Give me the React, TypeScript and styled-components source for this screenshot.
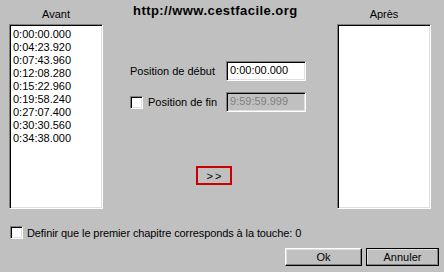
import styled, { createGlobalStyle, css } from "styled-components";

const GlobalStyle = createGlobalStyle`
  html, body {
    margin: 0;
    padding: 0;
    background: #c0c0c0;
  }
  body {
    font-family: "Liberation Sans", Arial, sans-serif;
    font-size: 11px;
    color: #000;
  }
`;

const chapters = [
  "0:00:00.000",
  "0:04:23.920",
  "0:07:43.960",
  "0:12:08.280",
  "0:15:22.960",
  "0:19:58.240",
  "0:27:07.400",
  "0:30:30.560",
  "0:34:38.000",
];

const sunken = css`
  border-style: solid;
  border-width: 1px;
  border-color: #808080 #fff #fff #808080;
  box-shadow: inset 1px 1px #000, inset -1px -1px #dfdfdf;
  box-sizing: border-box;
`;

const raised = css`
  border-style: solid;
  border-width: 1px;
  border-color: #fff #000 #000 #fff;
  box-shadow: inset -1px -1px #808080, inset 1px 1px #dfdfdf;
  box-sizing: border-box;
`;

export default function App() {
  return (
    <>
      <GlobalStyle />
      <Dialog>
        <Main>
          <ListColumn>
            <ColumnLabel>Avant</ColumnLabel>
            <ListBox>
              {chapters.map((c) => (
                <ListRow key={c}>{c}</ListRow>
              ))}
            </ListBox>
          </ListColumn>

          <Center>
            <Title>http://www.cestfacile.org</Title>
            <FieldRow $top={43}>
              <FieldLabel $width={96}>Position de début</FieldLabel>
              <TextInput>0:00:00.000</TextInput>
            </FieldRow>
            <FieldRow $top={11}>
              <CheckBox />
              <FieldLabel $width={78}>Position de fin</FieldLabel>
              <TextInput $disabled>9:59:59.999</TextInput>
            </FieldRow>
            <MoveButton>&gt;&gt;</MoveButton>
          </Center>

          <ListColumn>
            <ColumnLabel>Après</ColumnLabel>
            <ListBox />
          </ListColumn>
        </Main>

        <OptionRow>
          <CheckBox />
          <span>Definir que le premier chapitre corresponds à la touche: 0</span>
        </OptionRow>

        <ButtonBar>
          <PushButton $width={77}>Ok</PushButton>
          <PushButton $width={73} $default>
            Annuler
          </PushButton>
        </ButtonBar>
      </Dialog>
    </>
  );
}

const Dialog = styled.div`
  width: 444px;
  height: 272px;
  background: #c0c0c0;
  display: flex;
  flex-direction: column;
  overflow: hidden;
`;

const Main = styled.div`
  display: flex;
  padding-left: 9px;
  height: 209px;
`;

const ListColumn = styled.div`
  width: 94px;
  display: flex;
  flex-direction: column;
`;

const ColumnLabel = styled.div`
  height: 24px;
  padding-top: 8px;
  box-sizing: border-box;
  line-height: 13px;
  text-align: center;
`;

const ListBox = styled.div`
  ${sunken};
  height: 185px;
  background: #fff;
  padding: 3px 0 0 3px;
`;

const ListRow = styled.div`
  line-height: 13px;
  height: 13px;
  white-space: nowrap;
`;

const Center = styled.div`
  width: 234px;
  padding-left: 27px;
  box-sizing: border-box;
  display: flex;
  flex-direction: column;
`;

const Title = styled.div`
  margin-top: 4px;
  padding-left: 3px;
  line-height: 14px;
  font-size: 13px;
  letter-spacing: 0.45px;
  font-weight: bold;
  white-space: nowrap;
`;

const FieldRow = styled.div<{ $top: number }>`
  display: flex;
  align-items: center;
  height: 20px;
  margin-top: ${(p) => p.$top}px;
`;

const FieldLabel = styled.span<{ $width: number }>`
  width: ${(p) => p.$width}px;
  white-space: nowrap;
`;

const TextInput = styled.div<{ $disabled?: boolean }>`
  ${sunken};
  width: 80px;
  height: 20px;
  line-height: 16px;
  padding-left: 3px;
  background: ${(p) => (p.$disabled ? "#c0c0c0" : "#fff")};
  color: ${(p) => (p.$disabled ? "#808080" : "#000")};
`;

const CheckBox = styled.span`
  ${sunken};
  display: inline-block;
  flex-shrink: 0;
  width: 13px;
  height: 13px;
  background: #fff;
  margin-right: 5px;
`;

const MoveButton = styled.div`
  ${raised};
  margin-top: 54px;
  margin-left: 66px;
  width: 36px;
  height: 19px;
  outline: 2px solid #cc0000;
  outline-offset: -2px;
  display: flex;
  align-items: center;
  justify-content: center;
  letter-spacing: 2px;
  padding-left: 2px;
`;

const OptionRow = styled.div`
  display: flex;
  align-items: center;
  margin-top: 17px;
  padding-left: 10px;
  height: 13px;
  white-space: nowrap;
  letter-spacing: -0.1px;

  ${CheckBox} {
    margin-right: 4px;
  }
`;

const ButtonBar = styled.div`
  display: flex;
  justify-content: flex-end;
  gap: 4px;
  margin-top: 9px;
  padding-right: 5px;
`;

const PushButton = styled.div<{ $width: number; $default?: boolean }>`
  ${raised};
  width: ${(p) => p.$width}px;
  height: 18px;
  display: flex;
  align-items: center;
  justify-content: center;
  ${(p) =>
    p.$default &&
    css`
      outline: 1px solid #000;
      outline-offset: -1px;
    `}
`;
